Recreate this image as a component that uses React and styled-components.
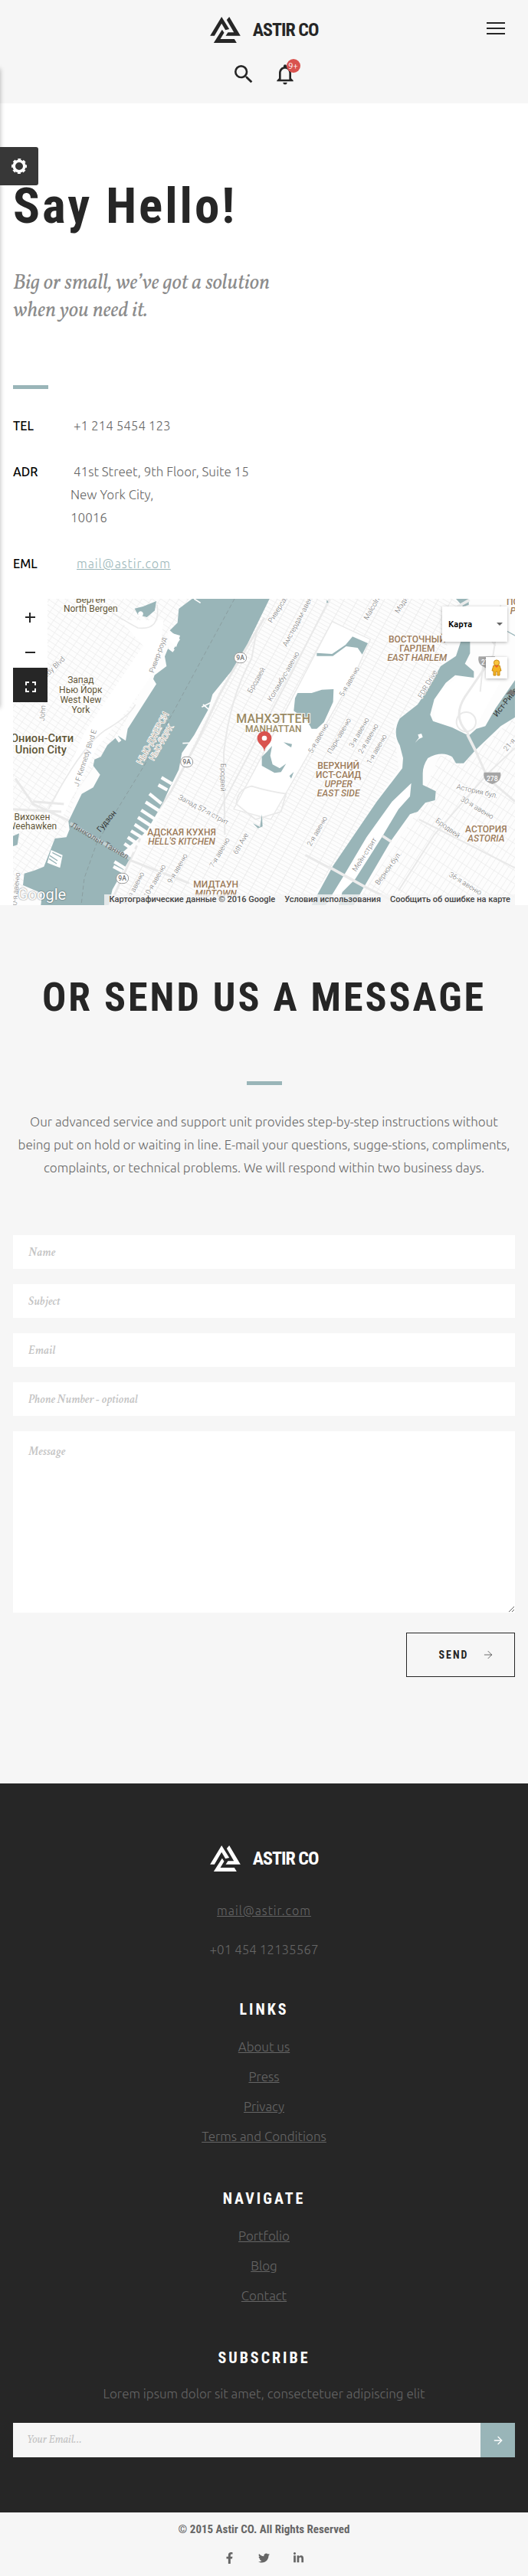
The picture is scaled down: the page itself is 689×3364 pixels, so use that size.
import React from 'react';
import styled, { createGlobalStyle } from 'styled-components';
import { MdSearch, MdNotificationsNone } from 'react-icons/md';
import { FaFacebookF, FaTwitter, FaLinkedinIn } from 'react-icons/fa';
import { ArrowRight } from 'lucide-react';

const footerLinks = ['About us', 'Press', 'Privacy', 'Terms and Conditions'];
const footerNav = ['Portfolio', 'Blog', 'Contact'];
const formFields = [
  { id: 'name', label: 'Name', type: 'text' },
  { id: 'subject', label: 'Subject', type: 'text' },
  { id: 'email', label: 'Email', type: 'email' },
  { id: 'phone', label: 'Phone Number - optional', type: 'tel' },
];

// x, y is the centre of the label, r its rotation
const streets = [
  { t: 'John', x: 167, y: 484, r: -85 },
  { t: 'Kennedy Blvd', x: 190, y: 325, r: -44 },
  { t: 'Ривер-роуд', x: 618, y: 256, r: -70 },
  { t: 'J F Kennedy Blvd E', x: 334, y: 660, r: -72 },
  { t: 'Бродвей', x: 1004, y: 355, r: -60 },
  { t: 'Бродвей', x: 874, y: 736, r: 90 },
  { t: 'Запад 57-я стрит', x: 797, y: 863, r: 28 },
  { t: '6th Ave', x: 943, y: 995, r: -60 },
  { t: '7-я авеню', x: 860, y: 1030, r: -60 },
  { t: '9-я авеню', x: 695, y: 1092, r: -60 },
  { t: '10-я авеню', x: 606, y: 1142, r: -60 },
  { t: '11-я авеню', x: 524, y: 1172, r: -62 },
  { t: '30-я авеню', x: 62, y: 1180, r: -84 },
  { t: 'Риверсайд', x: 1094, y: 68, r: -58 },
  { t: 'Амстердам-авеню', x: 1170, y: 115, r: -62 },
  { t: 'Malcolm X', x: 1464, y: 60, r: -60 },
  { t: 'Мэдисон', x: 1584, y: 40, r: -58 },
  { t: 'Коламбус-авеню', x: 1110, y: 340, r: -60 },
  { t: '5-я авеню', x: 1368, y: 360, r: -60 },
  { t: '5-я авеню', x: 1246, y: 582, r: -60 },
  { t: 'Парк-авеню', x: 1328, y: 573, r: -60 },
  { t: '3-я авеню', x: 1406, y: 560, r: -60 },
  { t: '2-я авеню', x: 1442, y: 584, r: -60 },
  { t: '1-я авеню', x: 1475, y: 625, r: -60 },
  { t: 'FDR Drive', x: 1674, y: 370, r: -60 },
  { t: '2-я авеню', x: 1242, y: 946, r: -60 },
  { t: 'Мейн-стрит', x: 1427, y: 1038, r: -57 },
  { t: 'Вернон бул.', x: 1520, y: 1092, r: -54 },
  { t: 'Астория бул.', x: 1868, y: 790, r: 13 },
  { t: '30-я авеню', x: 1868, y: 855, r: 31 },
  { t: 'Бродвей', x: 1753, y: 934, r: 36 },
  { t: '36-я авеню', x: 1822, y: 1152, r: 32 },
  { t: '21-я', x: 1994, y: 608, r: -50 },
];

const districts = [
  { x: 355, lines: ['Берген', 'North Bergen'], y: 50, size: 36, step: 37 },
  { x: 316, lines: ['Запад', 'Нью Йорк', 'West New', 'York'], y: 367, size: 36, step: 39 },
  { x: 126, lines: ['Вихокен', 'Weehawken'], y: 903, size: 36, step: 37 },
  { x: 160, lines: ['Юнион-Сити', 'Union City'], y: 596, size: 44, step: 45, bold: true },
  { x: 1070, lines: ['МАНХЭТТЕН'], y: 521, size: 48, step: 37, tone: '#9a8a63', bold: true },
  { x: 1070, lines: ['MANHATTAN'], y: 557, size: 36, step: 37, tone: '#9a8a63', bold: true },
];

const areas = [
  { x: 711, y: 962, lines: ['АДСКАЯ КУХНЯ'], en: ["HELL'S KITCHEN"] },
  { x: 845, y: 1166, lines: ['МИДТАУН'], en: ['MIDTOWN'] },
  { x: 1325, y: 702, lines: ['ВЕРХНИЙ', 'ИСТ-САЙД'], en: ['UPPER', 'EAST SIDE'] },
  { x: 1633, y: 206, lines: ['ВОСТОЧНЫЙ', 'ГАРЛЕМ'], en: ['EAST HARLEM'] },
  { x: 1903, y: 950, lines: ['АСТОРИЯ'], en: ['ASTORIA'] },
  { x: 2110, y: 60, lines: ['ПОРТ-МОРРИС'], en: ['PORT MORRIS'] },
];

const piers = [
  [632, 736, 672, 760], [620, 765, 655, 785], [585, 800, 632, 838], [570, 832, 622, 866],
  [553, 864, 608, 900], [540, 892, 592, 926], [527, 920, 575, 952], [513, 945, 560, 974],
  [500, 970, 545, 1000], [487, 995, 528, 1024], [448, 1066, 490, 1092], [444, 1085, 480, 1104],
  [715, 602, 760, 600], [790, 460, 830, 440], [795, 450, 818, 470], [455, 575, 470, 595],
  [760, 36, 785, 52], [660, 225, 680, 240],
];

const LogoMark = () => (
  <svg width="40" height="34" viewBox="43 36 119 102" fill="currentColor" aria-hidden="true">
    <polygon points="88,36 118,84 103,88 88,62 60,110 43,110" />
    <polygon points="118,36 162,110 104,110 113,97 136,97 108,48" />
    <polygon points="90,86 98,98 83,123 138,123 147,138 57,138" />
  </svg>
);

const GearIcon = () => (
  <svg width="20" height="20" viewBox="0 0 20 20" fill="none" stroke="#fff" aria-hidden="true">
    <circle cx="10" cy="10" r="6.8" strokeWidth="3.6" />
    <circle cx="10" cy="10" r="9" strokeWidth="2" strokeDasharray="4 3.07" strokeDashoffset="2" />
  </svg>
);

const Brand = () => (
  <Logo href="#home">
    <LogoMark />
    <span>ASTIR CO</span>
  </Logo>
);

const MapDrawing = () => (
  <MapSvg viewBox="51 36 1965 1200" preserveAspectRatio="xMidYMid slice" aria-hidden="true">
    <defs>
      <pattern id="manhattan" width="46" height="15" patternUnits="userSpaceOnUse" patternTransform="rotate(29)">
        <path d="M0 0H46M0 0V15" stroke="#ebebeb" strokeWidth="5" fill="none" />
      </pattern>
      <pattern id="jersey" width="30" height="19" patternUnits="userSpaceOnUse" patternTransform="rotate(34)">
        <path d="M0 0H30M0 0V19" stroke="#ececec" strokeWidth="4" fill="none" />
      </pattern>
      <pattern id="queens" width="20" height="44" patternUnits="userSpaceOnUse" patternTransform="rotate(33)">
        <path d="M0 0H20M0 0V44" stroke="#ebebeb" strokeWidth="4" fill="none" />
      </pattern>
    </defs>
    <rect x="51" y="36" width="1965" height="1200" fill="#fdfdfd" />
    <path d="M51 36H740L600 300L480 540L300 790L250 960L51 1235Z" fill="url(#jersey)" />
    <path d="M1035 36H1800L1700 400L1540 520L1560 700L1200 1235H430L640 860L760 600Z" fill="url(#manhattan)" />
    <path d="M1720 650L1830 660L2016 500V1235H1390L1620 890Z" fill="url(#queens)" />
    <path d="M470 120L640 120L620 300L500 470L380 620L240 900L200 860L330 560L560 220Z" fill="#fff" />
    <path d="M1300 125L1450 195L1390 330L1060 900L915 860L1000 700Z" fill="#fff" stroke="#e9e9e9" strokeWidth="4" />
    <path d="M1700 420L1790 340L1890 330L1960 360L1860 540L1790 560L1700 520Z" fill="#fff" />
    <g fill="none" stroke="#e9e9e9" strokeWidth="9">
      <path d="M1035 110L905 330L860 410L770 600L670 790L560 950L430 1235" />
      <path d="M1005 160L985 270Q900 420 876 640L880 960" strokeWidth="6" />
      <path d="M1290 36L1140 330L1040 520L840 900" strokeWidth="6" />
      <path d="M925 840Q930 780 985 770Q1050 790 1120 800L1100 870L1000 900Z" strokeWidth="5" />
      <path d="M60 740L130 840L280 910M130 830L250 840M51 860L240 870" />
      <path d="M190 860Q330 590 430 540Q510 490 530 450" strokeWidth="5" />
      <path d="M380 50Q480 120 540 150Q630 160 615 60" strokeWidth="5" />
      <path d="M280 900L510 1060L740 1150" />
      <path d="M1195 1040L1290 1090L1430 1165L1560 1230" />
      <path d="M1930 260L1820 420Q1770 500 1830 560L1910 740L2016 830" />
      <path d="M1800 36L1940 220M1960 60L1930 260M1880 400L1890 300" strokeWidth="6" />
      <circle cx="1825" cy="518" r="38" strokeWidth="6" />
      <path d="M1560 1180L1700 960L1910 720L2016 620M1640 900L2016 1090" strokeWidth="6" />
    </g>
    <g fill="#99b5b8">
      <path d="M752 36L700 75L695 130L665 160L705 195L678 235L660 225L645 262L652 300L605 335L600 350L612 370L500 545L492 592L462 572L420 610L395 655L370 665L365 690L392 725L365 775L320 800L268 908L272 940L260 970L215 975L172 1085L135 1100L95 1112L90 1158L165 1190L160 1236H425L440 1175L505 1060L480 1030L575 945L640 830L665 775L700 705L712 640L760 570L815 470L832 410L905 320L970 210L1055 36Z" />
      <path d="M527 74L560 66L612 45L606 82L575 108L540 98Z" />
      <path d="M51 965L75 955L68 1000L51 1005Z" />
      <path d="M1785 36H1835V60L1812 66Z" />
      <path d="M1805 200H1840V250L1820 290L1855 320V345L1782 335L1745 365L1700 430L1684 490L1695 515L1770 540L1835 572L1865 545L1900 535L1940 465L2016 355V500L1960 535L1860 630L1815 680L1785 680L1770 655Q1730 630 1675 660Q1655 690 1655 720V765L1706 790L1703 825L1665 835L1635 870L1605 880L1530 985L1425 1165L1385 1236H1220L1305 1080L1475 830L1575 700L1578 660L1565 610Q1535 560 1565 505L1635 450L1675 390L1725 300L1785 260Z" />
      <path d="M1165 405L1220 405L1260 392L1306 390L1304 440L1268 520L1240 545H1220L1200 510L1150 475L1155 425Z" />
      <path d="M1240 248L1300 252L1353 216L1380 184L1440 210L1418 254L1400 228L1355 222L1303 260L1240 260Z" />
      <path d="M1025 655L1045 635L1065 612L1058 650L1067 685L1095 700L1120 682L1100 715L1075 718L1025 690Z" />
      <path d="M1110 598L1143 605L1140 618L1126 610ZM1133 730L1150 714L1140 740ZM1280 40L1286 50L1278 52Z" />
      <path d="M990 915L1018 930L1025 880L1028 928L1010 935Z" />
      <path d="M1980 158L2016 178V182L1980 162Z" />
    </g>
    <path d="M1610 758L1535 830L1435 970L1340 1130L1275 1236H1325L1340 1185L1390 1135L1495 970L1560 860L1605 810Z" fill="#fff" />
    <path d="M1625 600L1640 580L1636 568L1650 564L1655 578L1640 585Z" fill="#fff" />
    <path d="M550 85A10 10 0 1 0 551 85M200 1020L245 1040L235 1090L185 1070ZM655 165L705 180L690 225L665 200Z" fill="#fff" />
    <g stroke="#fdfdfd">
      {piers.map(([x1, y1, x2, y2]) => (
        <line key={`${x1}-${y1}`} x1={x1} y1={y1} x2={x2} y2={y2} strokeWidth={x1 > 700 ? 5 : 13} />
      ))}
    </g>
    <path d="M195 1042L225 1062M192 1054L222 1074M205 1030L240 1048" stroke="#99b5b8" strokeWidth="4" />
    <g stroke="#ececec" strokeWidth="11">
      <path d="M1830 568L1862 632M1285 1085L1430 1165M1498 965L1532 988M1790 68L1838 40" />
    </g>
    <path d="M275 915L510 1055" stroke="#c4d1d2" strokeWidth="12" />
    <path d="M918 36L570 680L380 990L330 1130L318 1236" fill="none" stroke="#8b9ea0" strokeWidth="3" strokeDasharray="16 10" />
    <Halo>
      {streets.map((s) => (
        <text key={`${s.t}${s.x}`} transform={`translate(${s.x} ${s.y}) rotate(${s.r})`} dy="9" fontSize="28" fill="#757575">
          {s.t}
        </text>
      ))}
      {districts.map((d) => (
        <g key={d.lines[0]} fontSize={d.size} fontWeight={d.bold ? 500 : 400} fill={d.tone || '#5f5637'}>
          {d.lines.map((line, i) => (
            <text key={line} x={d.x} y={d.y + i * d.step}>{line}</text>
          ))}
        </g>
      ))}
      {areas.map((a) => (
        <g key={a.lines[0]} fontSize="36" fill="#9c7b5a" fontWeight="500">
          {a.lines.map((line, i) => (
            <text key={line} x={a.x} y={a.y + i * 36}>{line}</text>
          ))}
          {a.en.map((line, i) => (
            <text key={line} x={a.x} y={a.y + (a.lines.length + i) * 36} fontStyle="italic">{line}</text>
          ))}
        </g>
      ))}
      <text transform="translate(600 583) rotate(-62)" dy="9" fontSize="34" fill="#b0a290">НЬЮ-ДЖЕРСИ</text>
      <text transform="translate(632 600) rotate(-60)" dy="9" fontSize="30" fill="#b0a290">НЬЮ-ЙОРК</text>
    </Halo>
    <RiverNames>
      <text transform="translate(418 908) rotate(-50)" dy="9">Гудзон</text>
      <text transform="translate(1985 435) rotate(-52)" dy="9">Ист-Ривер</text>
      <text transform="translate(390 985) rotate(30)" dy="9" fill="#6b6b6b">Линкольн Таннел</text>
    </RiverNames>
    <Shields>
      {[[941, 267], [731, 675], [479, 1131]].map(([x, y]) => (
        <g key={x}>
          <rect x={x - 24} y={y - 20} width="48" height="40" rx="20" fill="#fff" stroke="#9a9a9a" strokeWidth="3" />
          <text x={x} y={y + 9} fill="#757575">9A</text>
        </g>
      ))}
      {[[1927, 738], [1906, 284]].map(([x, y]) => (
        <g key={x}>
          <path d={`M${x - 32} ${y - 22}H${x + 32}Q${x + 40} ${y + 12} ${x} ${y + 24}Q${x - 40} ${y + 12} ${x - 32} ${y - 22}Z`} fill="#a5a5a5" />
          <text x={x} y={y + 11} fill="#fff">278</text>
        </g>
      ))}
    </Shields>
    <path d="M1980 410L2000 390L2020 410Z" fill="#757575" />
    <path d="M1034 632C1034 612 1007 606 1007 582A28 28 0 0 1 1063 582C1063 606 1036 612 1036 632Z" fill="#d9534f" />
    <circle cx="1035" cy="582" r="10" fill="#fff" />
  </MapSvg>
);

const Pegman = () => (
  <svg width="14" height="22" viewBox="0 0 14 22" aria-hidden="true">
    <path d="M3 8H11L13 15H11V21H8V16H6V21H3V15H1Z" fill="#f5b324" stroke="#c98a10" strokeWidth="1" />
    <circle cx="7" cy="4.5" r="3.6" fill="#f9c53f" stroke="#c98a10" strokeWidth="1" />
    <path d="M4 8H10L7 11Z" fill="#e8622c" />
  </svg>
);

const App = () => (
  <>
    <GlobalStyle />
    <Page>
      <SidePanel />
      <SettingsButton type="button" aria-label="Settings">
        <GearIcon />
      </SettingsButton>

      <Header>
        <HeaderRow>
          <Brand />
          <Burger type="button" aria-label="Menu">
            <span />
            <span />
            <span />
          </Burger>
        </HeaderRow>
        <Tools>
          <ToolButton type="button" aria-label="Search">
            <MdSearch size={32} />
          </ToolButton>
          <ToolButton type="button" aria-label="Notifications">
            <MdNotificationsNone size={32} />
            <Badge>9+</Badge>
          </ToolButton>
        </Tools>
      </Header>

      <Contact>
        <Title>Say Hello!</Title>
        <Lead>Big or small, we’ve got a solution when you need it.</Lead>
        <Divider />
        <Details>
          <dt>TEL</dt>
          <dd>+1 214 5454 123</dd>
          <dt>ADR</dt>
          <dd>
            41st Street, 9th Floor, Suite 15
            <br />
            New York City,
            <br />
            10016
          </dd>
          <dt>EML</dt>
          <dd>
            <MailLink href="mailto:mail@astir.com">mail@astir.com</MailLink>
          </dd>
        </Details>
        <MapBox>
          <MapDrawing />
          <ZoomControls>
            <ZoomButton type="button" aria-label="Zoom in">
              <svg width="13" height="13" viewBox="0 0 13 13" stroke="currentColor" strokeWidth="2">
                <path d="M0 6H13M6 0V13" />
              </svg>
            </ZoomButton>
            <ZoomButton type="button" aria-label="Zoom out">
              <svg width="13" height="13" viewBox="0 0 13 13" stroke="currentColor" strokeWidth="2">
                <path d="M0 7H13" />
              </svg>
            </ZoomButton>
            <ZoomButton type="button" aria-label="Full screen" $dark>
              <svg width="14" height="14" viewBox="0 0 14 14" fill="none" stroke="currentColor" strokeWidth="2">
                <path d="M1 5V1H5M9 1H13V5M13 9V13H9M5 13H1V9" />
              </svg>
            </ZoomButton>
          </ZoomControls>
          <MapSide>
            <MapType aria-label="Map type" defaultValue="map">
              <option value="map">Карта</option>
            </MapType>
            <PegmanButton type="button" aria-label="Street View">
              <Pegman />
            </PegmanButton>
          </MapSide>
          <GoogleMark href="#google">Google</GoogleMark>
          <MapFooter>
            <span>Картографические данные © 2016 Google</span>
            <a href="#terms">Условия использования</a>
            <a href="#report">Сообщить об ошибке на карте</a>
          </MapFooter>
        </MapBox>
      </Contact>

      <Message>
        <Heading>OR SEND US A MESSAGE</Heading>
        <Divider $center />
        <Intro>
          Our advanced service and support unit provides step-by-step instructions without being put on hold or waiting
          in line. E-mail your questions, sugge-stions, compliments, complaints, or technical problems. We will respond
          within two business days.
        </Intro>
        <Form onSubmit={(e) => e.preventDefault()}>
          {formFields.map((field) => (
            <Field key={field.id} id={field.id} type={field.type} placeholder={field.label} aria-label={field.label} />
          ))}
          <TextArea id="message" placeholder="Message" aria-label="Message" />
          <SendButton type="submit">
            SEND
            <ArrowRight size={16} strokeWidth={1} />
          </SendButton>
        </Form>
      </Message>

      <Footer>
        <Brand />
        <FooterContacts>
          <FooterMail href="mailto:mail@astir.com">mail@astir.com</FooterMail>
          <FooterText>+01 454 12135567</FooterText>
        </FooterContacts>
        <FooterTitle>LINKS</FooterTitle>
        <LinkList>
          {footerLinks.map((link) => (
            <li key={link}>
              <FooterLink href="#links">{link}</FooterLink>
            </li>
          ))}
        </LinkList>
        <FooterTitle>NAVIGATE</FooterTitle>
        <LinkList>
          {footerNav.map((link) => (
            <li key={link}>
              <FooterLink href="#navigate">{link}</FooterLink>
            </li>
          ))}
        </LinkList>
        <FooterTitle>SUBSCRIBE</FooterTitle>
        <FooterText>Lorem ipsum dolor sit amet, consectetuer adipiscing elit</FooterText>
        <Subscribe onSubmit={(e) => e.preventDefault()}>
          <SubscribeInput type="email" placeholder="Your Email..." aria-label="Your Email" />
          <SubscribeButton type="submit" aria-label="Subscribe">
            <ArrowRight size={16} strokeWidth={2} />
          </SubscribeButton>
        </Subscribe>
      </Footer>

      <Bottom>
        <Copyright>© 2015 Astir CO. All Rights Reserved</Copyright>
        <Socials>
          <a href="#facebook" aria-label="Facebook"><FaFacebookF size={15} /></a>
          <a href="#twitter" aria-label="Twitter"><FaTwitter size={15} /></a>
          <a href="#linkedin" aria-label="LinkedIn"><FaLinkedinIn size={15} /></a>
        </Socials>
      </Bottom>
    </Page>
  </>
);

export default App;

const condensed = '"Roboto Condensed", Roboto, sans-serif';
const body = 'Ubuntu, "Noto Sans", sans-serif';
const serif = 'Vollkorn, "Crimson Text", "Liberation Serif", serif';

const GlobalStyle = createGlobalStyle`
  * {
    box-sizing: border-box;
  }
  body {
    margin: 0;
    background: #fff;
    color: #666;
    font-family: ${body};
    font-size: 17px;
    font-weight: 300;
    line-height: 30px;
  }
  button {
    font: inherit;
    cursor: pointer;
  }
`;

const Page = styled.div`
  position: relative;
  overflow: hidden;
`;

const SidePanel = styled.aside`
  position: absolute;
  top: 90px;
  left: -240px;
  width: 240px;
  height: 834px;
  box-shadow: 0 0 6px rgba(0, 0, 0, 0.3);
`;

const SettingsButton = styled.button`
  position: absolute;
  top: 192px;
  left: 0;
  width: 50px;
  height: 50px;
  display: flex;
  align-items: center;
  justify-content: center;
  padding: 0;
  border: none;
  border-radius: 0 3px 3px 0;
  background: #373737;
`;

const Header = styled.header`
  padding: 22px 30px;
  background: #f6f6f6;
  color: #262626;
`;

const HeaderRow = styled.div`
  display: grid;
  grid-template-columns: 1fr auto 1fr;
  > :first-child {
    grid-column: 2;
  }
`;

const Logo = styled.a`
  display: inline-flex;
  align-items: center;
  gap: 16px;
  height: 34px;
  color: inherit;
  text-decoration: none;
  font-family: ${condensed};
  font-size: 24px;
  font-weight: 700;
  letter-spacing: -1px;
`;

const Burger = styled.button`
  justify-self: end;
  width: 24px;
  height: 30px;
  display: flex;
  flex-direction: column;
  justify-content: center;
  gap: 5px;
  padding: 0;
  border: none;
  background: none;
  span {
    height: 2px;
    background: #262626;
  }
`;

const Tools = styled.div`
  display: flex;
  justify-content: center;
  gap: 22px;
  margin-top: 25px;
`;

const ToolButton = styled.button`
  position: relative;
  display: flex;
  padding: 0;
  border: none;
  background: none;
  color: #262626;
`;

const Badge = styled.span`
  position: absolute;
  top: -4px;
  right: -4px;
  width: 18px;
  height: 18px;
  border-radius: 50%;
  background: #d9534f;
  color: #fff;
  font-size: 11px;
  font-weight: 400;
  line-height: 18px;
  text-align: center;
`;

const Contact = styled.section`
  padding: 96px 17px 0;
`;

const Title = styled.h1`
  margin: 0 0 45px;
  color: #262626;
  font-family: ${condensed};
  font-size: 65px;
  font-weight: 700;
  line-height: 76px;
  letter-spacing: 3px;
`;

const Lead = styled.p`
  max-width: 380px;
  margin: 0 0 79px;
  color: #8c8c8c;
  font-family: ${serif};
  font-size: 27px;
  font-style: italic;
  font-weight: 400;
  line-height: 36px;
`;

const Divider = styled.div`
  width: 46px;
  height: 5px;
  margin: ${(props) => (props.$center ? '0 auto 33px' : '0 0 33px')};
  background: #99b5b8;
`;

const Details = styled.dl`
  display: grid;
  grid-template-columns: 75px 1fr;
  row-gap: 30px;
  margin: 0 0 31px;
  dt {
    color: #000;
    font-size: 16px;
    font-weight: 500;
  }
  dd {
    margin: 0;
    text-indent: 4px;
  }
`;

const MailLink = styled.a`
  display: inline-block;
  margin-left: 4px;
  color: #99b5b8;
  font-size: 16px;
  text-indent: 0;
  letter-spacing: 1px;
`;

const MapBox = styled.div`
  position: relative;
  height: 400px;
  overflow: hidden;
  font-family: Roboto, sans-serif;
`;

const MapSvg = styled.svg`
  display: block;
  width: 100%;
  height: 100%;
`;

const Halo = styled.g`
  font-family: Roboto, sans-serif;
  text-anchor: middle;
  paint-order: stroke;
  stroke: #fff;
  stroke-width: 5px;
`;

const RiverNames = styled.g`
  font-family: Roboto, sans-serif;
  font-size: 31px;
  font-weight: 400;
  text-anchor: middle;
  fill: #333;
`;

const Shields = styled.g`
  font-family: Roboto, sans-serif;
  font-size: 26px;
  font-weight: 500;
  text-anchor: middle;
`;

const ZoomControls = styled.div`
  position: absolute;
  top: 0;
  left: 0;
`;

const ZoomButton = styled.button`
  width: 45px;
  height: 45px;
  display: flex;
  align-items: center;
  justify-content: center;
  padding: 4px 0 0;
  border: none;
  background: ${(props) => (props.$dark ? '#262626' : '#fff')};
  color: ${(props) => (props.$dark ? '#fff' : '#262626')};
`;

const MapSide = styled.div`
  position: absolute;
  top: 10px;
  right: 10px;
  display: flex;
  flex-direction: column;
  align-items: flex-end;
  gap: 20px;
`;

const MapType = styled.select`
  width: 85px;
  height: 46px;
  padding: 0 8px;
  border: none;
  appearance: none;
  background: #fff
    url("data:image/svg+xml,%3Csvg xmlns='http://www.w3.org/2000/svg' width='8' height='4'%3E%3Cpath d='M0 0h8L4 4z' fill='%23666'/%3E%3C/svg%3E")
    no-repeat right 6px center;
  box-shadow: 0 1px 4px rgba(0, 0, 0, 0.3);
  color: #000;
  font-family: ${body};
  font-size: 11px;
  font-weight: 700;
`;

const PegmanButton = styled.button`
  width: 28px;
  height: 28px;
  display: flex;
  align-items: center;
  justify-content: center;
  padding: 0;
  border: none;
  background: #fff;
  box-shadow: 0 1px 4px rgba(0, 0, 0, 0.3);
`;

const GoogleMark = styled.a`
  position: absolute;
  left: 6px;
  bottom: 2px;
  color: #fff;
  font-size: 20px;
  font-weight: 400;
  line-height: 24px;
  text-decoration: none;
  text-shadow: 0 0 2px rgba(0, 0, 0, 0.6);
`;

const MapFooter = styled.div`
  position: absolute;
  right: 0;
  bottom: 0;
  display: flex;
  gap: 12px;
  padding: 0 6px;
  background: rgba(245, 245, 245, 0.8);
  color: #444;
  font-size: 11px;
  font-weight: 500;
  line-height: 14px;
  white-space: nowrap;
  a {
    color: inherit;
    text-decoration: none;
  }
`;

const Message = styled.section`
  padding: 90px 17px 139px;
  background: #f6f6f6;
  text-align: center;
`;

const Heading = styled.h2`
  margin: 0 0 78px;
  color: #262626;
  font-family: ${condensed};
  font-size: 52px;
  font-weight: 700;
  line-height: 62px;
  letter-spacing: 3px;
`;

const Intro = styled.p`
  margin: 0 0 73px;
`;

const Form = styled.form`
  display: flex;
  flex-direction: column;
  gap: 20px;
`;

const Field = styled.input`
  width: 100%;
  height: 44px;
  padding: 0 20px;
  border: none;
  border-radius: 0;
  background: #fff;
  color: #262626;
  font-family: 'Crimson Text', 'Liberation Serif', serif;
  font-size: 16px;
  font-style: italic;
  font-weight: 600;
  &::placeholder {
    color: #c4c4c4;
  }
`;

const TextArea = styled(Field).attrs({ as: 'textarea' })`
  height: 237px;
  padding: 16px 20px;
  resize: vertical;
`;

const SendButton = styled.button`
  align-self: flex-end;
  display: flex;
  align-items: center;
  justify-content: center;
  gap: 18px;
  width: 142px;
  height: 58px;
  margin-top: 6px;
  padding: 0 0 0 16px;
  border: 1px solid #262626;
  background: none;
  color: #262626;
  font-family: ${condensed};
  font-size: 14px;
  font-weight: 700;
  letter-spacing: 2px;
`;

const Footer = styled.footer`
  display: flex;
  flex-direction: column;
  align-items: center;
  padding: 81px 17px 72px;
  background: #262626;
  color: #fff;
`;

const FooterContacts = styled.div`
  display: flex;
  flex-direction: column;
  align-items: center;
  gap: 21px;
  margin: 36px 0 51px;
`;

const FooterText = styled.p`
  margin: 0;
  color: #666;
`;

const FooterLink = styled.a`
  color: #666;
`;

const FooterMail = styled(FooterLink)`
  font-size: 16px;
  letter-spacing: 1px;
`;

const FooterTitle = styled.h3`
  margin: 0 0 20px;
  font-family: ${condensed};
  font-size: 20px;
  font-weight: 700;
  line-height: 24px;
  letter-spacing: 3px;
`;

const LinkList = styled.ul`
  display: flex;
  flex-direction: column;
  align-items: center;
  gap: 9px;
  margin: 0 0 54px;
  padding: 2px 0 0;
  list-style: none;
`;

const Subscribe = styled.form`
  align-self: stretch;
  display: flex;
  margin-top: 23px;
`;

const SubscribeInput = styled(Field)`
  flex: 1;
  height: 45px;
  padding: 0 18px;
  background: #f6f6f6;
  font-family: ${serif};
  font-size: 14px;
  font-weight: 400;
`;

const SubscribeButton = styled.button`
  width: 45px;
  height: 45px;
  display: flex;
  align-items: center;
  justify-content: center;
  padding: 0;
  border: none;
  background: #99b5b8;
  color: #fff;
`;

const Bottom = styled.div`
  padding: 12px 17px 17px;
  background: #f6f6f6;
  text-align: center;
`;

const Copyright = styled.p`
  margin: 0 0 20px;
  font-family: ${condensed};
  font-size: 15px;
  font-weight: 700;
  line-height: 20px;
`;

const Socials = styled.div`
  display: flex;
  justify-content: center;
  gap: 30px;
  a {
    display: flex;
    color: #666;
  }
`;
